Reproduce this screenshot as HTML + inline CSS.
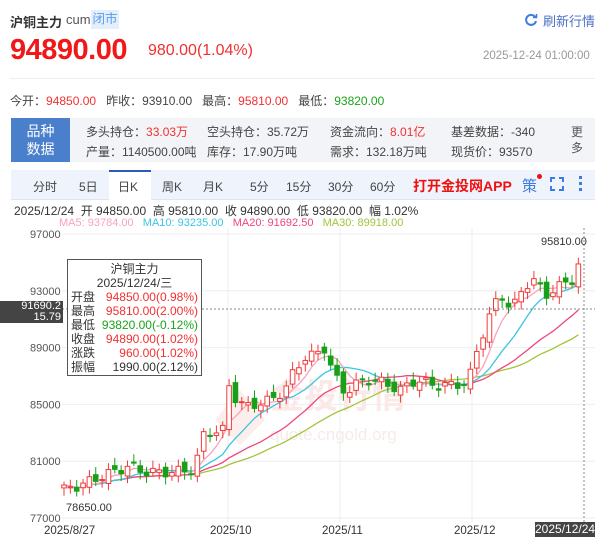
<!DOCTYPE html>
<html><head><meta charset="utf-8">
<style>
*{margin:0;padding:0;box-sizing:border-box}
body{width:600px;height:537px;overflow:hidden;background:#fff;font-family:"Liberation Sans","Noto Sans CJK SC",sans-serif;color:#333;position:relative}
.a{position:absolute;white-space:nowrap}
.r{color:#f23030}.g{color:#1aa31a}
</style></head><body>
<div class="a" style="left:10px;top:12px;font-size:13px;font-weight:bold;color:#333">沪铜主力</div>
<div class="a" style="left:66px;top:12px;font-size:13px;color:#555">cum</div>
<div class="a" style="left:91px;top:10px;width:28px;height:19px;background:#e3effc;color:#5a9be8;font-size:12.5px;line-height:19px;text-align:center">闭市</div>
<svg class="a" style="left:524px;top:13px" width="14" height="14" viewBox="0 0 14 14"><path d="M11.5 4.5A5 5 0 1 0 12 8" fill="none" stroke="#3d7de0" stroke-width="2"/><path d="M9 4.5h3.5V1" fill="none" stroke="#3d7de0" stroke-width="1.6"/></svg>
<div class="a" style="left:543px;top:11px;font-size:13px;color:#4a6fc4">刷新行情</div>
<div class="a r" style="left:10px;top:34px;font-size:29px;font-weight:bold;letter-spacing:-0.5px;color:#f01818">94890.00</div>
<div class="a r" style="left:148px;top:42px;font-size:16px">980.00(1.04%)</div>
<div class="a" style="left:483px;top:50px;font-size:11.5px;color:#999">2025-12-24 01:00:00</div>
<div class="a" style="left:10px;top:78px;width:585px;height:1px;background:#eee"></div>
<div class="a" style="left:10px;top:92px;font-size:12px;color:#444">今开：<span class="r">94850.00</span>&nbsp;&nbsp;&nbsp;昨收：93910.00&nbsp;&nbsp;&nbsp;最高：<span class="r">95810.00</span>&nbsp;&nbsp;&nbsp;最低：<span class="g">93820.00</span></div>
<div class="a" style="left:11px;top:118px;width:584px;height:44px;background:#f3f4f7"></div>
<div class="a" style="left:11px;top:118px;width:59px;height:44px;background:#4a7fcc;color:#fff;font-size:14px;line-height:18px;text-align:center;padding-top:4px">品种<br>数据</div>
<div class="a" style="left:86px;top:122px;font-size:12px;color:#444;line-height:20px">多头持仓：<span class="r">33.03万</span><br>产量：1140500.00吨</div>
<div class="a" style="left:207px;top:122px;font-size:12px;color:#444;line-height:20px">空头持仓：35.72万<br>库存：17.90万吨</div>
<div class="a" style="left:330px;top:122px;font-size:12px;color:#444;line-height:20px">资金流向：<span class="r">8.01亿</span><br>需求：132.18万吨</div>
<div class="a" style="left:451px;top:122px;font-size:12px;color:#444;line-height:20px">基差数据：-340<br>现货价：93570</div>
<div class="a" style="left:571px;top:124px;font-size:12px;color:#555;line-height:16px">更<br>多</div>
<div class="a" style="left:11px;top:170px;width:584px;height:30px;background:#eef3fc;border-bottom:1px solid #dde5f3"></div>
<div class="a" style="left:109px;top:170px;width:42px;height:31px;background:#fff;border-top:2px solid #2a5bb8"></div>
<div class="a" style="top:178px;left:0;font-size:12px;color:#444">
<span class="a" style="left:33px">分时</span><span class="a" style="left:79px">5日</span><span class="a" style="left:118px">日K</span><span class="a" style="left:162px">周K</span><span class="a" style="left:203px">月K</span><span class="a" style="left:250px">5分</span><span class="a" style="left:286px">15分</span><span class="a" style="left:328px">30分</span><span class="a" style="left:370px">60分</span></div>
<div class="a" style="left:413px;top:176px;font-size:14px;font-weight:bold;color:#f01010">打开金投网APP</div>
<div class="a" style="left:522px;top:175px;font-size:15px;color:#3d7de0">策</div>
<div class="a" style="left:537px;top:174px;width:5px;height:5px;border-radius:50%;background:#f01010"></div>
<svg class="a" style="left:550px;top:177px" width="14" height="14" viewBox="0 0 14 14" fill="none" stroke="#3d7de0" stroke-width="2"><path d="M1 5V1h4M9 1h4v4M13 9v4H9M5 13H1V9"/></svg>
<div class="a" style="left:579px;top:176px;width:3px;height:3px;background:#3d7de0;box-shadow:0 6px 0 #3d7de0,0 12px 0 #3d7de0"></div>
<div class="a" style="left:14px;top:202px;font-size:12px;color:#333">2025/12/24&nbsp; 开 94850.00&nbsp; 高 95810.00&nbsp; 收 94890.00&nbsp; 低 93820.00&nbsp; 幅 1.02%</div>
<div class="a" style="left:59px;top:217px;font-size:11px"><span style="color:#f7a3bd">MA5: 93784.00</span>&nbsp;&nbsp; <span style="color:#3cc4e4">MA10: 93235.00</span>&nbsp;&nbsp; <span style="color:#f0467a">MA20: 91692.50</span>&nbsp;&nbsp; <span style="color:#a3c43c">MA30: 89918.00</span></div>
<svg id="ch" class="a" style="left:0;top:0" width="600" height="537"></svg>
<div class="a" style="left:0;top:301px;width:63px;height:22px;background:#444;color:#fff;font-size:11px;line-height:11px;text-align:right;padding-right:2px">91690.2<br>15.79</div>
<div class="a" style="left:67px;top:259px;width:135px;height:117px;background:#fff;border:1px solid #555;font-size:12px;line-height:14px;padding:2px 3px">
<div style="text-align:center">沪铜主力</div><div style="text-align:center">2025/12/24/三</div>
<div>开盘<span class="r" style="float:right">94850.00(0.98%)</span></div>
<div>最高<span class="r" style="float:right">95810.00(2.00%)</span></div>
<div>最低<span class="g" style="float:right">93820.00(-0.12%)</span></div>
<div>收盘<span class="r" style="float:right">94890.00(1.02%)</span></div>
<div>涨跌<span class="r" style="float:right">960.00(1.02%)</span></div>
<div>振幅<span style="float:right">1990.00(2.12%)</span></div>
</div>
<div class="a" style="left:535px;top:522px;width:60px;height:15px;background:#444;color:#fff;font-size:12px;line-height:15px;text-align:center">2025/12/24</div>
<script>
var s=document.getElementById('ch'),h='';
function Y(p){return 234+(97000-p)*0.0142}
[97000,93000,89000,85000,81000,77000].forEach(function(p){var y=Y(p);h+='<line x1="62" x2="595" y1="'+y+'" y2="'+y+'" stroke="#eee"/><text x="30" y="'+(y+4)+'" font-size="11" fill="#555" font-family="Liberation Sans">'+p+'</text>'});
[228,340,472].forEach(function(x){h+='<line x1="'+x+'" x2="'+x+'" y1="228" y2="522" stroke="#eee"/>'});
h+='<text x="44" y="534" font-size="11.5" fill="#333" font-family="Liberation Sans">2025/8/27</text><text x="210" y="534" font-size="11.5" fill="#333" font-family="Liberation Sans">2025/10</text><text x="322" y="534" font-size="11.5" fill="#333" font-family="Liberation Sans">2025/11</text><text x="454" y="534" font-size="11.5" fill="#333" font-family="Liberation Sans">2025/12</text>';
h+='<text x="270" y="408" font-size="34" fill="#fae9e6" font-family="Noto Sans CJK SC" font-weight="bold">金投行情</text><text x="270" y="440" font-size="17" fill="#f6ebe9" font-family="Liberation Sans">quote.cngold.org</text><path d="M215 420l25-30 25 30-25 25z" fill="#fbeeeb"/>';
var K=[[64,79000],[80,79300],[100,79900],[115,80300],[130,80700],[142,80300],[160,80200],[180,80300],[195,80400],[202,82800],[215,83200],[222,82700],[228,86500],[235,85500],[245,84800],[255,85000],[270,85300],[285,86000],[295,87500],[305,88300],[315,88500],[325,89000],[333,87200],[345,85800],[355,86400],[370,86800],[385,86500],[400,86000],[415,86700],[440,86300],[468,86500],[476,88600],[488,91000],[500,92800],[512,91700],[525,93400],[535,93800],[545,92600],[555,93200],[568,93600],[576,94000],[584,94890]];
function P(x){for(var i=1;i<K.length;i++)if(x<=K[i][0]){var a=K[i-1],b=K[i];return a[1]+(b[1]-a[1])*(x-a[0])/(b[0]-a[0])}return 94890}
var C=[],X=[];for(var x=64;x<=584.5;x+=6.35){X.push(x);C.push(P(x)+Math.sin(x*1.7)*350)}
C[C.length-1]=94890;
function ma(n,c){var o=[];for(var i=0;i<C.length;i++){var a=Math.max(0,i-n+1),t=0;for(var j=a;j<=i;j++)t+=C[j];o.push(t/(i-a+1))}var d='';o.forEach(function(v,i){d+=(i?'L':'M')+X[i].toFixed(1)+' '+Y(v).toFixed(1)});h+='<path d="'+d+'" fill="none" stroke="'+c+'" stroke-width="1.3"/>'}
ma(30,'#a3c43c');ma(20,'#f0467a');ma(10,'#3cc4e4');ma(5,'#f7a3bd');
for(var i=0;i<C.length;i++){var o=i?C[i-1]+Math.cos(i*2.3)*300:C[i]-200,c=C[i],hi=Math.max(o,c)+250+Math.abs(Math.sin(i))*300,lo=Math.min(o,c)-250-Math.abs(Math.cos(i))*300,up=c>=o,col=up?'#f23a3a':'#18a018',x=X[i];
h+='<line x1="'+x+'" x2="'+x+'" y1="'+Y(hi)+'" y2="'+Y(lo)+'" stroke="'+col+'"/>';
var t=Y(Math.max(o,c)),hh=Math.max(1,Y(Math.min(o,c))-t);
h+='<rect x="'+(x-2.3)+'" y="'+t+'" width="4.6" height="'+hh+'" fill="'+(up?'#fff':col)+'" stroke="'+col+'"/>'}
h+='<line x1="62" x2="595" y1="309" y2="309" stroke="#888" stroke-dasharray="2,2"/><line x1="584" x2="584" y1="228" y2="522" stroke="#888" stroke-dasharray="2,2"/>';
h+='<text x="541" y="245" font-size="11" fill="#333" font-family="Liberation Sans">95810.00</text><text x="66" y="511" font-size="11" fill="#333" font-family="Liberation Sans">78650.00</text>';
s.innerHTML=h;
</script>
</body></html>
